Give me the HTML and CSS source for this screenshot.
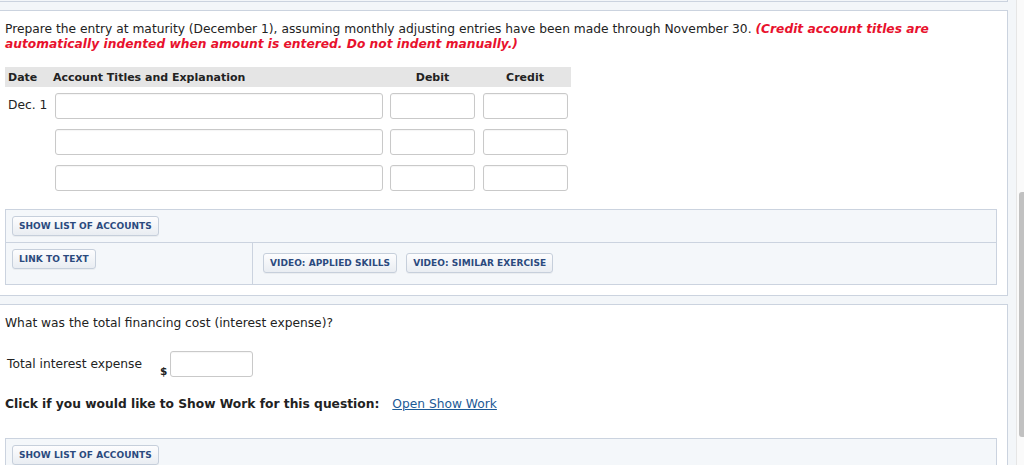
FILE: index.html
```html
<!DOCTYPE html>
<html>
<head>
<meta charset="utf-8">
<link rel="stylesheet" href="styles.css">
</head>
<body>
<div class="page">
  <div class="main">
    <div class="panel panel-top"></div>

    <div class="panel q1">
      <p class="prompt">Prepare the entry at maturity (December 1), assuming monthly adjusting entries have been made through November 30. <em class="note">(Credit account titles are<br>automatically indented when amount is entered. Do not indent manually.)</em></p>

      <div class="journal">
        <div class="jrow jhead">
          <div class="c-date">Date</div>
          <div class="c-acct">Account Titles and Explanation</div>
          <div class="c-num">Debit</div>
          <div class="c-num">Credit</div>
        </div>
        <div class="jbody">
          <div class="jrow">
            <div class="c-date">Dec. 1</div>
            <div class="c-acct"><input type="text" class="field f-acct"></div>
            <div class="c-num"><input type="text" class="field f-num"></div>
            <div class="c-num"><input type="text" class="field f-num"></div>
          </div>
          <div class="jrow">
            <div class="c-date"></div>
            <div class="c-acct"><input type="text" class="field f-acct"></div>
            <div class="c-num"><input type="text" class="field f-num"></div>
            <div class="c-num"><input type="text" class="field f-num"></div>
          </div>
          <div class="jrow">
            <div class="c-date"></div>
            <div class="c-acct"><input type="text" class="field f-acct"></div>
            <div class="c-num"><input type="text" class="field f-num"></div>
            <div class="c-num"><input type="text" class="field f-num"></div>
          </div>
        </div>
      </div>

      <div class="tools">
        <div class="tools-row top-row"><button class="btn">SHOW LIST OF ACCOUNTS</button></div>
        <div class="tools-row split">
          <div class="cell cell-left"><button class="btn">LINK TO TEXT</button></div>
          <div class="cell cell-right"><button class="btn">VIDEO: APPLIED SKILLS</button><button class="btn">VIDEO: SIMILAR EXERCISE</button></div>
        </div>
      </div>
    </div>

    <div class="panel q2">
      <p class="prompt">What was the total financing cost (interest expense)?</p>
      <div class="answer">
        <span class="ans-label">Total interest expense</span>
        <span class="dollar">$</span>
        <input type="text" class="field f-ans">
      </div>
      <p class="showwork"><strong>Click if you would like to Show Work for this question:</strong><a href="#" class="swlink">Open Show Work</a></p>
      <div class="tools">
        <div class="tools-row top-row"><button class="btn">SHOW LIST OF ACCOUNTS</button></div>
      </div>
    </div>
  </div>
  <div class="scrollbar"><div class="thumb"></div></div>
</div>
</body>
</html>
```

FILE: styles.css
```css
html, body {
  margin: 0;
  padding: 0;
  height: 465px;
  overflow: hidden;
}
body {
  background: #f3f6f9;
  font-family: "DejaVu Sans", Verdana, sans-serif;
  font-size: 12.25px;
  line-height: 15px;
  color: #222;
}
.page {
  display: flex;
  height: 465px;
}
.main {
  flex: 1;
  padding-right: 8px;
  min-width: 0;
  overflow: hidden;
}
.panel {
  background: #fff;
  border: 1px solid #cbd3df;
  border-left: none;
}
.panel-top {
  height: 1px;
  border-top: none;
  background: #f3f6f9;
}
.q1 {
  margin-top: 8px;
  padding: 11px 10px 10px 5px;
}
.q2 {
  margin-top: 8px;
  padding: 11px 10px 0 5px;
  height: 160px;
}
.prompt {
  margin: 0;
}
.note {
  color: #e8112d;
  font-weight: bold;
  font-style: italic;
}
.journal {
  width: 566px;
  margin-top: 15px;
}
.jrow {
  display: grid;
  grid-template-columns: 47px 334px 93px 92px;
}
.jhead {
  background: #e5e5e5;
  height: 20px;
  align-items: center;
  font-weight: bold;
  font-size: 11px;
}
.jhead .c-date { padding-left: 3px; }
.jhead .c-acct { padding-left: 1px; }
.jhead .c-num { text-align: center; }
.jbody {
  display: flex;
  flex-direction: column;
  gap: 10px;
  margin-top: 6px;
}
.jbody .c-date {
  padding: 5px 0 0 3px;
}
.field {
  box-sizing: border-box;
  height: 26px;
  border: 1px solid #c9c9c9;
  border-radius: 3px;
  background: #fff;
  padding: 0 4px;
  margin: 0;
  font: inherit;
  display: block;
  box-shadow: inset 0 1px 1px rgba(0,0,0,0.04);
}
.f-acct { width: 328px; margin-left: 3px; }
.f-num { width: 85px; margin-left: 4px; }
.tools {
  margin-top: 18px;
  border: 1px solid #cbd3df;
  background: #f4f7fa;
}
.tools-row.top-row {
  padding: 6px 6px 6px;
}
.split {
  display: flex;
  border-top: 1px solid #cbd3df;
  height: 41px;
}
.cell-left {
  width: 240px;
  padding: 6px 0 0 6px;
  border-right: 1px solid #cbd3df;
}
.cell-right {
  display: flex;
  align-items: flex-start;
  gap: 9px;
  padding: 10px 0 0 10px;
}
.btn {
  height: 20px;
  box-sizing: border-box;
  border: 1px solid #c6cfdb;
  border-radius: 3px;
  background: linear-gradient(#fdfdfe, #e9edf2);
  color: #2b4a7e;
  font-family: "DejaVu Sans", Verdana, sans-serif;
  font-weight: bold;
  font-size: 9px;
  letter-spacing: 0.05px;
  line-height: 18px;
  padding: 0 6px;
  margin: 0;
  box-shadow: 0 1px 0 rgba(0,0,0,0.04);
}
.answer {
  display: flex;
  align-items: center;
  margin-top: 20px;
  padding-left: 2px;
}
.ans-label {
  width: 153px;
}
.dollar {
  align-self: flex-end;
  font-size: 10.5px;
  font-weight: bold;
  line-height: 10px;
  padding-bottom: 1px;
  width: 10px;
}
.f-ans {
  width: 83px;
}
.showwork {
  margin: 20px 0 0;
}
.showwork strong {
  margin-right: 13px;
}
.swlink {
  color: #1c5a96;
}
.q2 .tools {
  margin-top: 26px;
}
.scrollbar {
  width: 8px;
  box-sizing: border-box;
  background: #fafafa;
  border-left: 1px solid #e6e6e6;
  display: flex;
  flex-direction: column;
}
.thumb {
  margin-top: 192px;
  margin-left: 2px;
  height: 245px;
  background: #c1c1c1;
  border-radius: 3px 0 0 3px;
}
```
